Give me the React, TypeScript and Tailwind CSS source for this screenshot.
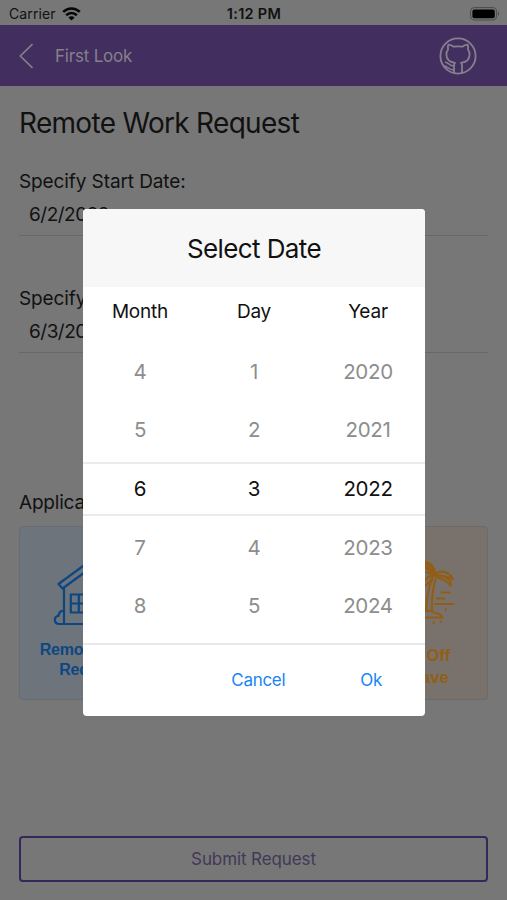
import React from 'react';
import { clsx } from 'clsx';

interface PickerColumn {
  label: string;
  values: number[];
}

const COLUMNS: PickerColumn[] = [
  { label: 'Month', values: [4, 5, 6, 7, 8] },
  { label: 'Day', values: [1, 2, 3, 4, 5] },
  { label: 'Year', values: [2020, 2021, 2022, 2023, 2024] },
];

const SELECTED_ROW = 2;

const StatusBar: React.FC = () => (
  <div className="h-[25px] shrink-0 grid grid-cols-3 items-center pl-[9px] pr-[7px] pt-[3px] text-[14px] text-[#111]">
    <div className="flex items-center gap-[6px]">
      <span className="leading-[18px] -mt-px tracking-[0.1px]">Carrier</span>
      <svg className="-mt-px" width="19" height="14" viewBox="0 0 19 14" fill="none" stroke="#050505" strokeWidth="2.6">
        <path d="M1.2 4.9C6 .3 13 .3 17.8 4.9" />
        <path d="M4.2 8.2C7.2 5.3 11.8 5.3 14.8 8.2" />
        <path d="M9.5 13.6 6.4 10.5C8.2 8.9 10.8 8.9 12.6 10.5Z" fill="#050505" stroke="none" />
      </svg>
    </div>
    <span className="text-center font-semibold text-[14.5px] tracking-[0.3px] pr-[1px]">1:12 PM</span>
    <div className="flex justify-end">
      <svg className="-mt-px" width="30" height="14" viewBox="0 0 30 14" fill="none">
        <rect x=".6" y=".6" width="26" height="12.4" rx="3.6" stroke="#4c4c4c" />
        <rect x="2.4" y="2.4" width="22.4" height="8.8" rx="2" fill="#000" />
        <path d="M28 4.6c1.6.9 1.6 3.5 0 4.4z" fill="#4c4c4c" />
      </svg>
    </div>
  </div>
);

const NavBar: React.FC = () => (
  <div className="h-[61px] shrink-0 flex items-center bg-[#422e5f] pl-[19px] pr-[30px] text-[#86808c]">
    <svg width="15" height="26" viewBox="0 0 15 26" fill="none" stroke="currentColor" strokeWidth="1.6">
      <path d="M13.5 1.2 1.3 13l12.2 11.8" />
    </svg>
    <span className="ml-[21px] pt-[2px] text-[17px] tracking-[-0.2px]">First Look</span>
    <svg className="ml-auto" width="38" height="38" viewBox="0 0 38 38" fill="none" stroke="currentColor" strokeWidth="1.8" strokeLinejoin="round" strokeLinecap="round">
      <circle cx="19" cy="19" r="17.6" />
      <path d="M15 36v-7.500c0-1.200.3-2 1-2.700-5-.6-8.600-3.300-8.600-8.300 0-2 .5-3.600 1.700-5-.4-1.700-.3-3.400.3-4.800 2 .2 3.700.8 5.200 2 2.800-.5 6-.5 8.800 0 1.500-1.200 3.200-1.800 5.200-2 .6 1.400.7 3.100.3 4.800 1.200 1.400 1.700 3 1.700 5 0 5-3.600 7.700-8.600 8.300.7.700 1 1.500 1 2.700V36" />
      <path d="M6.500 25.300c3 .3 4.100 4 8.500 3.700M5.500 29c3 .8 5 4.100 9.500 4" strokeWidth="1.500" />
    </svg>
  </div>
);

const DateField: React.FC<{ label: string; value: string }> = ({ label, value }) => (
  <div className="h-[67px] flex flex-col border-b border-[#676767]">
    <span className="pt-px text-[19px] leading-[24px] tracking-[-0.1px]">{label}</span>
    <span className="mt-[9px] pl-[10px] text-[19px] leading-[24px] tracking-[-0.5px]">{value}</span>
  </div>
);

const HouseIcon: React.FC = () => (
  <svg className="overflow-visible" width="78" height="66" viewBox="0 0 78 66" fill="none" stroke="currentColor" strokeWidth="2.200" strokeLinejoin="round" strokeLinecap="round">
    <path d="M39-1 3.500 25l4 4.500L39 6.500l31.500 23 4-4.500z" />
    <path d="M9 29.500V65M69 29.500V65M74 65H4.500C-1.500 65-1.500 57.500 3.500 56.800 4 52 9 50 9 54" />
    <path d="M15.800 35.500h16v18h-16zM23.800 35.500v18M15.800 44.500h16" />
    <path d="M44 65V36h15v29" />
  </svg>
);

const PalmIcon: React.FC = () => (
  <svg className="overflow-visible" width="78" height="66" viewBox="0 0 78 66" fill="none" stroke="currentColor" strokeWidth="2.200" strokeLinejoin="round" strokeLinecap="round">
    <path d="M59 16C54 9 47 7 41 11c7 0 11 3 18 5z" />
    <path d="M60 16C60 7 54 2 46 2c5 3 8 8 14 14zM51 4c4 2 7 5 7 9" />
    <path d="M60 16c4-6 14-3.500 18 4-6-2.500-11-4-18-4z" />
    <path d="M60 17c3 3 12 3 15.500 10 2-6-5-10-11-10" />
    <path d="M59 16c-7 1-11 6-11 12 4-2 8-6 11-12z" />
    <path d="M57 20c-4 10-5.500 20-6 32M60.500 20c-3 11-4 21-3.500 32" />
    <path d="M40 58.500h27.500c-2-4-5-4.500-8-4.500-3-3-8-3-11 0-4-1-8 0-8.500 4.500z" />
    <path d="M60 45h18.500M66.500 33.500H75M62 39.500h7.500" />
    <path d="M70.700 50.500h.1M58.700 63.700h.1M65.700 62.800h.1" strokeWidth="2.500" />
  </svg>
);

interface TypeCardProps {
  icon: React.ReactNode;
  lines: string[];
  className: string;
  labelClassName: string;
}

const TypeCard: React.FC<TypeCardProps> = ({ icon, lines, className, labelClassName }) => (
  <div className={clsx('h-[174px] pt-[32px] rounded-[4px] border flex flex-col items-center text-center font-bold', className)}>
    {icon}
    <div className={clsx("font-['Liberation_Sans',Arial,sans-serif]", labelClassName)}>
      {lines.map((line) => (
        <div key={line}>{line}</div>
      ))}
    </div>
  </div>
);

const DatePickerDialog: React.FC = () => (
  <div className="absolute left-[83px] top-[209px] w-[342px] h-[507px] bg-white rounded-[4px] overflow-hidden flex flex-col text-[#111]">
    <div className="h-[78px] shrink-0 bg-[#f7f7f7] flex items-center justify-center text-[26px] tracking-[-0.600px]">
      Select Date
    </div>
    <div className="h-[49px] shrink-0 pt-px grid grid-cols-3 items-center text-center text-[19px] tracking-[-0.2px]">
      {COLUMNS.map((column) => (
        <span key={column.label}>{column.label}</span>
      ))}
    </div>
    <div className="pt-[7px] h-[307px] shrink-0">
      {COLUMNS[0].values.map((_, row) => (
        <div
          key={row}
          className={clsx(
            'grid grid-cols-3 items-center text-center text-[20.500px] tracking-[-0.300px]',
            row === SELECTED_ROW
              ? 'h-[54px] mt-[2px] mb-[3px] border-y-2 border-[#ebebeb] text-[#111]'
              : 'h-[58.500px] text-[#8d8d8d]'
          )}
        >
          {COLUMNS.map((column) => (
            <span key={column.label}>{column.values[row]}</span>
          ))}
        </div>
      ))}
    </div>
    <div className="h-[73px] shrink-0 border-t-2 border-[#e8eaea] flex items-center justify-end pr-[43px] gap-[75px] text-[17px] tracking-[-0.300px] text-[#1985f3]">
      <button>Cancel</button>
      <button>Ok</button>
    </div>
  </div>
);

export default function App() {
  return (
    <div className="relative w-[507px] h-[900px] overflow-hidden flex flex-col bg-[#777777] text-[#111] font-[Inter,'Noto_Sans',sans-serif]">
      <StatusBar />
      <NavBar />
      <main className="flex-1 flex flex-col px-[19px] pb-[18px]">
        <h1 className="mt-[19px] text-[28px] leading-[36px] tracking-[-0.700px]">Remote Work Request</h1>
        <div className="mt-[28px] flex flex-col gap-[50px]">
          <DateField label="Specify Start Date:" value="6/2/2022" />
          <DateField label="Specify End Date:" value="6/3/2022" />
        </div>
        <div className="mt-[138px] text-[19px] leading-[24px] tracking-[-0.200px]">Application Type:</div>
        <div className="mt-[11px] flex justify-between">
          <TypeCard
            icon={<HouseIcon />}
            lines={['Remote Work', 'Request']}
            className="w-[149px] bg-[#6e747b] border-[#676d73] text-[#0d4782]"
            labelClassName="mt-[15px] text-[16px] leading-[20px] tracking-[-0.200px] -ml-[7px]"
          />
          <TypeCard
            icon={<PalmIcon />}
            lines={['Time Off', '& Leave']}
            className="w-[149px] bg-[#79726c] border-[#706a65] text-[#925e16]"
            labelClassName="mt-[19px] text-[16.5px] leading-[22px] pl-[7px]"
          />
        </div>
        <button className="mt-auto h-[46px] pt-[2px] rounded-[4px] border-2 border-[#35275a] text-[17px] tracking-[-0.100px] text-[#423958]">
          Submit Request
        </button>
      </main>
      <DatePickerDialog />
    </div>
  );
}
